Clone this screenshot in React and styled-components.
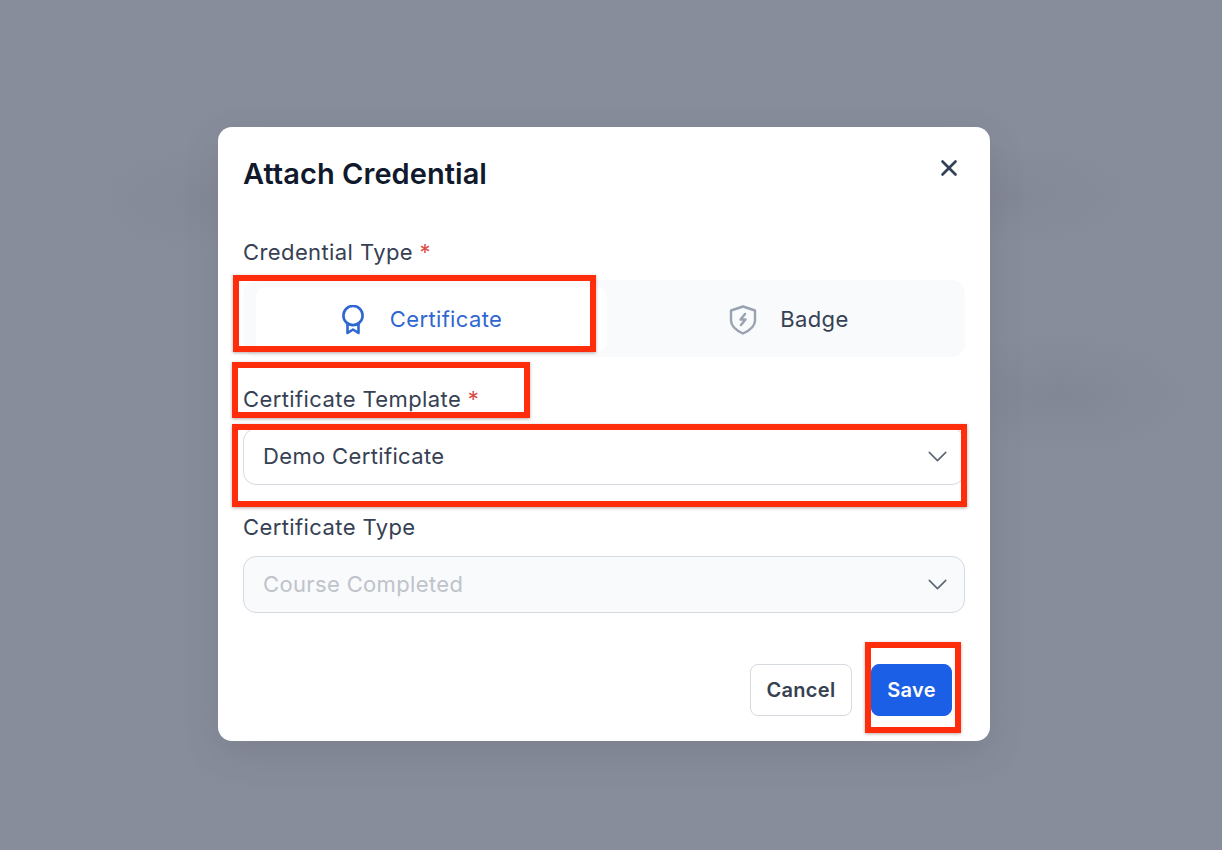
import React from 'react';
import styled, { createGlobalStyle } from 'styled-components';
import { X, ChevronDown } from 'lucide-react';

const GlobalStyle = createGlobalStyle`
  html, body {
    margin: 0;
    padding: 0;
    height: 100%;
  }
  body {
    font-family: Inter, "Liberation Sans", sans-serif;
    overflow: hidden;
  }
`;

const Page = styled.div`
  position: relative;
  width: 1222px;
  height: 850px;
  padding-top: 127px;
  padding-left: 218px;
  box-sizing: border-box;
  background-color: #888d9b;
  background-image:
    radial-gradient(ellipse 130px 60px at 1060px 395px, rgba(122, 126, 142, 0.45), transparent),
    radial-gradient(ellipse 120px 50px at 1010px 195px, rgba(124, 128, 144, 0.4), transparent),
    radial-gradient(ellipse 90px 50px at 190px 200px, rgba(124, 128, 144, 0.3), transparent);
`;

const Modal = styled.div`
  width: 772px;
  height: 614px;
  box-sizing: border-box;
  padding: 26px 25px 25px 25px;
  background: #fff;
  border-radius: 14px;
  box-shadow: 0 12px 36px rgba(60, 64, 80, 0.16);
  display: flex;
  flex-direction: column;
`;

const Header = styled.div`
  display: flex;
  align-items: center;
  justify-content: space-between;
  height: 42px;
  margin-bottom: 43px;
`;

const Title = styled.h2`
  margin: 0;
  font-size: 29px;
  font-weight: 600;
  letter-spacing: 0.05px;
  line-height: 42px;
  color: #111a2c;
`;

const CloseButton = styled.button`
  display: flex;
  padding: 0;
  margin: -12px 3px 0 0;
  border: none;
  background: none;
  color: #334155;
`;

const Label = styled.label`
  display: block;
  font-size: 22px;
  font-weight: 400;
  letter-spacing: 0.4px;
  line-height: 28px;
  color: #364153;
  margin-bottom: ${p => p.$gap}px;
`;

const Star = styled.span`
  color: #dc4a45;
`;

const Tabs = styled.div`
  display: grid;
  grid-template-columns: 351px 351px;
  height: 77px;
  box-sizing: border-box;
  padding: 7px 0 5px 13px;
  border-radius: 14px;
  background: #f8fafc;
  margin-bottom: 28px;
`;

const Tab = styled.div`
  box-sizing: border-box;
  display: flex;
  align-items: center;
  justify-content: center;
  gap: 22px;
  border-radius: 10px;
  font-size: 22px;
  font-weight: 400;
  letter-spacing: 0.35px;
  background: ${p => (p.$active ? '#fff' : 'transparent')};
  color: ${p => (p.$active ? '#2f67d0' : '#364153')};
  padding: ${p => (p.$active ? '0 23px 0 0' : '0 0 0 12px')};
`;

// text sits a pixel above the icon's centre line
const RowText = styled.span`
  margin-bottom: 2px;
`;

const Select = styled.div`
  display: flex;
  align-items: center;
  justify-content: space-between;
  height: 57px;
  box-sizing: border-box;
  padding: 0 10px 0 19px;
  border: 1px solid #d5d9e0;
  border-radius: 13px;
  background: ${p => (p.$disabled ? '#f8fafc' : '#fff')};
  color: ${p => (p.$disabled ? '#bfc3ca' : '#364153')};
  font-size: 22px;
  font-weight: 400;
  letter-spacing: 0.35px;
  margin-bottom: ${p => p.$gap}px;
`;

const Chevron = styled(ChevronDown)`
  color: #5b6472;
`;

const Footer = styled.div`
  display: flex;
  justify-content: flex-end;
  gap: 19px;
  padding-right: 13px;
`;

const Button = styled.button`
  height: 52px;
  width: ${p => p.$width}px;
  padding: 0;
  border-radius: 8px;
  font-family: inherit;
  font-size: 20px;
  font-weight: 600;
  letter-spacing: 0.3px;
  border: 1px solid ${p => (p.$primary ? '#1a5fe6' : '#d5d9e0')};
  background: ${p => (p.$primary ? '#1a5fe6' : '#fff')};
  color: ${p => (p.$primary ? '#fff' : '#374151')};
`;

// red annotation rectangles drawn on top of the screenshot
const Callout = styled.div`
  position: absolute;
  left: ${p => p.$x}px;
  top: ${p => p.$y}px;
  width: ${p => p.$w}px;
  height: ${p => p.$h}px;
  box-sizing: border-box;
  border: 6px solid #ff2d0b;
  box-shadow: 0 1px 3px rgba(60, 20, 10, 0.35);
  pointer-events: none;
`;

const CertificateIcon = () => (
  <svg width="30" height="30" viewBox="0 0 30 30" fill="none" stroke="currentColor" strokeWidth="2.6" strokeLinejoin="round" strokeLinecap="round">
    <circle cx="15" cy="10.5" r="9.6" />
    <path d="M9.5 19V28L15 24.5L20.5 28V19" />
  </svg>
);

const BadgeIcon = () => (
  <svg width="30" height="30" viewBox="0 0 30 30" fill="none" stroke="#9aa1b0" strokeWidth="2.4" strokeLinejoin="round" strokeLinecap="round">
    <path d="M15 1.5L27 5.5V15.5C27 21.5 21.5 25.5 15 28.5C8.5 25.5 3 21.5 3 15.5V5.5Z" />
    <path d="M17 9L12.5 14.5H17.5L13 20" />
  </svg>
);

export default function App() {
  return (
    <Page>
      <GlobalStyle />
      <Modal>
        <Header>
          <Title>Attach Credential</Title>
          <CloseButton>
            <X size={26} strokeWidth={2.4} />
          </CloseButton>
        </Header>

        <Label $gap={14}>
          Credential Type <Star>*</Star>
        </Label>
        <Tabs>
          <Tab $active>
            <CertificateIcon />
            <RowText>Certificate</RowText>
          </Tab>
          <Tab>
            <BadgeIcon />
            <RowText>Badge</RowText>
          </Tab>
        </Tabs>

        <Label $gap={15}>
          Certificate Template <Star>*</Star>
        </Label>
        <Select $gap={28}>
          <RowText>Demo Certificate</RowText>
          <Chevron size={33} strokeWidth={1.1} />
        </Select>

        <Label $gap={15}>Certificate Type</Label>
        <Select $disabled $gap={51}>
          <RowText>Course Completed</RowText>
          <Chevron size={33} strokeWidth={1.1} />
        </Select>

        <Footer>
          <Button $width={102}>Cancel</Button>
          <Button $primary $width={81}>Save</Button>
        </Footer>
      </Modal>

      <Callout $x={233} $y={275} $w={363} $h={77} />
      <Callout $x={232} $y={362} $w={298} $h={56} />
      <Callout $x={232} $y={424} $w={735} $h={83} />
      <Callout $x={865} $y={642} $w={96} $h={91} />
    </Page>
  );
}
